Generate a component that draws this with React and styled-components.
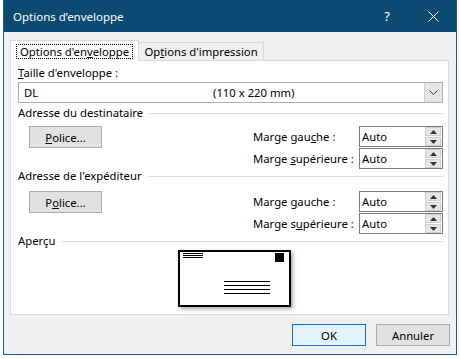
import React from "react";
import styled, { createGlobalStyle } from "styled-components";

const GlobalStyle = createGlobalStyle`
  html, body {
    margin: 0;
    padding: 0;
    background: #ffffff;
  }
  body {
    font-family: "Noto Sans", "Open Sans", sans-serif;
    font-size: 11.3px;
    color: #000;
    white-space: nowrap;
  }
`;

const Page = styled.div`
  width: 461px;
  height: 359px;
  padding-left: 3px;
  box-sizing: border-box;
`;

const Window = styled.div`
  width: 454px;
  height: 355px;
  box-sizing: border-box;
  border: 1px solid #1b5e8c;
  border-top: 0;
  background: #f0f0f0;
  display: flex;
  flex-direction: column;
`;

const TitleBar = styled.div`
  height: 32px;
  background: #0b4a72;
  color: #fff;
  display: flex;
  align-items: center;
  padding-left: 9px;
  flex-shrink: 0;
`;

const Title = styled.div`
  flex: 1;
  font-size: 11.5px;
`;

const TitleButton = styled.div`
  width: 46px;
  height: 32px;
  display: flex;
  align-items: center;
  justify-content: center;
  font-size: 13px;
`;

const Body = styled.div`
  padding: 8px 0 0 6px;
  display: flex;
  flex-direction: column;
`;

const TabStrip = styled.div`
  display: flex;
  align-items: flex-end;
  height: 20px;
`;

const Tab = styled.div`
  box-sizing: border-box;
  display: flex;
  align-items: center;
  justify-content: center;
  border: 1px solid #d9d9d9;
  border-bottom: 0;
  width: ${(p) => (p.$active ? "129px" : "126px")};
  height: ${(p) => (p.$active ? "21px" : "18px")};
  margin-bottom: ${(p) => (p.$active ? "-1px" : "0")};
  margin-left: ${(p) => (p.$active ? "0" : "-1px")};
  background: ${(p) => (p.$active ? "#fff" : "#f0f0f0")};
  position: relative;
  z-index: ${(p) => (p.$active ? 2 : 1)};
`;

const FocusText = styled.span`
  outline: 1px dotted #000;
  outline-offset: 0;
  padding: 0 3px;
  line-height: 13px;
`;

const Panel = styled.div`
  box-sizing: border-box;
  width: 439px;
  height: 255px;
  border: 1px solid #d9d9d9;
  background: #fff;
  padding: 0 5px 0 7px;
  display: flex;
  flex-direction: column;
`;

const FieldLabel = styled.div`
  margin-top: 4px;
  height: 16px;
  line-height: 16px;
`;

const Combo = styled.div`
  margin-top: 1px;
  box-sizing: border-box;
  height: 21px;
  border: 1px solid #adadad;
  display: flex;
  align-items: center;
`;

const ComboName = styled.span`
  width: 189px;
  padding-left: 5px;
`;

const ComboSize = styled.span`
  flex: 1;
`;

const ComboArrow = styled.div`
  width: 17px;
  height: 19px;
  background: #e5e5e5;
  border-left: 1px solid #cfcfcf;
  display: flex;
  align-items: center;
  justify-content: center;
`;

const GroupHeader = styled.div`
  margin-top: ${(p) => p.$top || 0}px;
  height: 14px;
  line-height: 14px;
  display: flex;
  align-items: center;
  gap: 6px;

  &::after {
    content: "";
    flex: 1;
    height: 1px;
    background: #dcdcdc;
  }
`;

const GroupBody = styled.div`
  margin-top: ${(p) => p.$top}px;
  height: 43px;
  display: flex;
  justify-content: space-between;
  align-items: flex-start;
`;

const Button = styled.div`
  box-sizing: border-box;
  width: ${(p) => p.$width || 74}px;
  height: 22px;
  margin-left: ${(p) => p.$left || 0}px;
  display: flex;
  align-items: center;
  justify-content: center;
  background: ${(p) => (p.$primary ? "#e5f1fb" : "#e1e1e1")};
  border: 1px solid ${(p) => (p.$primary ? "#0078d7" : "#adadad")};
`;

const MarginGrid = styled.div`
  display: grid;
  grid-template-columns: 106px 84px;
  grid-auto-rows: 21px;
  row-gap: 1px;
  align-items: center;
`;

const Spin = styled.div`
  box-sizing: border-box;
  height: 21px;
  border: 1px solid #7a7a7a;
  display: flex;
  align-items: center;
  padding-left: 2px;
`;

const SpinValue = styled.span`
  flex: 1;
`;

const SpinButtons = styled.div`
  width: 16px;
  height: 19px;
  margin-right: 1px;
  display: flex;
  flex-direction: column;
  gap: 1px;
`;

const SpinHalf = styled.div`
  flex: 1;
  background: #e5e5e5;
  border: 1px solid #cfcfcf;
  display: flex;
  align-items: center;
  justify-content: center;
`;

const Preview = styled.div`
  margin: 2px 0 0 160px;
  width: 113px;
  height: 57px;
  box-shadow: 2px 2px 4px rgba(0, 0, 0, 0.35);
  background: #fff;
`;

const Footer = styled.div`
  margin-top: 9px;
  display: flex;
  justify-content: flex-end;
  gap: 10px;
  padding-right: 6px;
`;

const Arrow = ({ up }) => (
  <svg width="7" height="4" viewBox="0 0 7 4">
    <path d={up ? "M0 4 L3.5 0 L7 4 Z" : "M0 0 L3.5 4 L7 0 Z"} fill="#333" />
  </svg>
);

function Spinner() {
  return (
    <Spin>
      <SpinValue>Auto</SpinValue>
      <SpinButtons>
        <SpinHalf>
          <Arrow up />
        </SpinHalf>
        <SpinHalf>
          <Arrow />
        </SpinHalf>
      </SpinButtons>
    </Spin>
  );
}

function Group({ title, headerTop, bodyTop, police, gauche, superieure }) {
  return (
    <>
      <GroupHeader $top={headerTop}>{title}</GroupHeader>
      <GroupBody $top={bodyTop}>
        <Button $left={11} $width={73}>
          {police}
        </Button>
        <MarginGrid>
          <span>{gauche}</span>
          <Spinner />
          <span>{superieure}</span>
          <Spinner />
        </MarginGrid>
      </GroupBody>
    </>
  );
}

function Envelope() {
  return (
    <Preview>
      <svg width="113" height="57" viewBox="0 0 113 57">
        <rect x="1" y="1" width="111" height="55" fill="#fff" stroke="#000" strokeWidth="2" />
        <g stroke="#000" strokeWidth="1">
          <line x1="5" x2="25" y1="3.5" y2="3.5" />
          <line x1="5" x2="25" y1="5.5" y2="5.5" />
          <line x1="5" x2="25" y1="7.5" y2="7.5" />
          <line x1="46" x2="92" y1="31.5" y2="31.5" />
          <line x1="46" x2="92" y1="35.5" y2="35.5" />
          <line x1="46" x2="92" y1="39.5" y2="39.5" />
          <line x1="46" x2="92" y1="43.5" y2="43.5" />
        </g>
        <rect x="97" y="3" width="9" height="9" fill="#000" />
      </svg>
    </Preview>
  );
}

export default function App() {
  return (
    <Page>
      <GlobalStyle />
      <Window>
        <TitleBar>
          <Title>Options d’enveloppe</Title>
          <TitleButton>?</TitleButton>
          <TitleButton>
            <svg width="11" height="11" viewBox="0 0 11 11">
              <path d="M0.5 0.5 L10.5 10.5 M10.5 0.5 L0.5 10.5" stroke="#fff" strokeWidth="1" />
            </svg>
          </TitleButton>
        </TitleBar>
        <Body>
          <TabStrip>
            <Tab $active>
              <FocusText>
                Options d'en<u>v</u>eloppe
              </FocusText>
            </Tab>
            <Tab>
              <span>
                Op<u>t</u>ions d'impression
              </span>
            </Tab>
          </TabStrip>
          <Panel>
            <FieldLabel>
              <u>T</u>aille d'enveloppe :
            </FieldLabel>
            <Combo>
              <ComboName>DL</ComboName>
              <ComboSize>(110 x 220 mm)</ComboSize>
              <ComboArrow>
                <svg width="9" height="5" viewBox="0 0 9 5">
                  <path d="M0.5 0.5 L4.5 4.5 L8.5 0.5" fill="none" stroke="#444" strokeWidth="1" />
                </svg>
              </ComboArrow>
            </Combo>
            <Group
              title="Adresse du destinataire"
              headerTop={3}
              bodyTop={6}
              police={
                <span>
                  <u>P</u>olice...
                </span>
              }
              gauche={
                <span>
                  Marge gau<u>c</u>he :
                </span>
              }
              superieure={
                <span>
                  Marge <u>s</u>upérieure :
                </span>
              }
            />
            <Group
              title="Adresse de l'expéditeur"
              headerTop={0}
              bodyTop={8}
              police={
                <span>
                  P<u>o</u>lice...
                </span>
              }
              gauche={
                <span>
                  Marge <u>g</u>auche :
                </span>
              }
              superieure={
                <span>
                  Marge s<u>u</u>périeure :
                </span>
              }
            />
            <GroupHeader $top={0}>Aperçu</GroupHeader>
            <Envelope />
          </Panel>
          <Footer>
            <Button $primary>OK</Button>
            <Button>Annuler</Button>
          </Footer>
        </Body>
      </Window>
    </Page>
  );
}
